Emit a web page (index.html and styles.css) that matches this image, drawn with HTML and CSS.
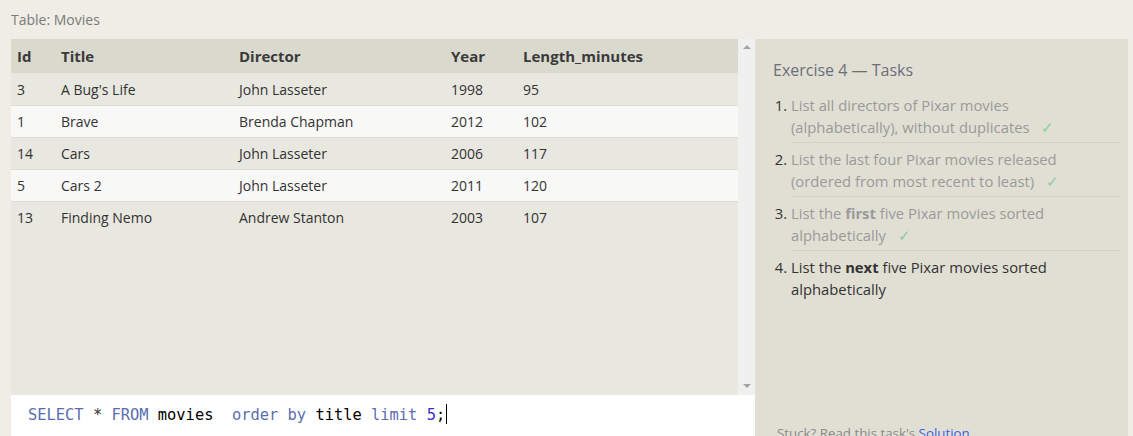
FILE: index.html
```html
<!DOCTYPE html>
<html>
<head>
<meta charset="utf-8">
<link rel="stylesheet" href="styles.css">
</head>
<body>
<div class="page">
  <div class="main">
    <div class="caption">Table: Movies</div>
    <div class="table-wrap">
      <div class="table-scroll">
        <table class="movies">
          <thead>
            <tr><th class="c-id">Id</th><th class="c-title">Title</th><th class="c-dir">Director</th><th class="c-year">Year</th><th>Length_minutes</th></tr>
          </thead>
          <tbody>
            <tr><td>3</td><td>A Bug's Life</td><td>John Lasseter</td><td>1998</td><td>95</td></tr>
            <tr><td>1</td><td>Brave</td><td>Brenda Chapman</td><td>2012</td><td>102</td></tr>
            <tr><td>14</td><td>Cars</td><td>John Lasseter</td><td>2006</td><td>117</td></tr>
            <tr><td>5</td><td>Cars 2</td><td>John Lasseter</td><td>2011</td><td>120</td></tr>
            <tr><td>13</td><td>Finding Nemo</td><td>Andrew Stanton</td><td>2003</td><td>107</td></tr>
          </tbody>
        </table>
      </div>
      <div class="scrollbar">
        <span class="arrow up"></span>
        <span class="arrow down"></span>
      </div>
    </div>
    <div class="editor"><span class="kw">SELECT</span> <span class="op">*</span> <span class="kw">FROM</span> <span class="id">movies</span>  <span class="kw">order by</span> <span class="id">title</span> <span class="kw">limit</span> <span class="num">5</span><span class="id">;</span><span class="cursor"></span></div>
  </div>
  <aside class="panel">
    <h2 class="panel-title">Exercise 4 — Tasks</h2>
    <ol class="tasks">
      <li class="done">List all directors of Pixar movies<br>(alphabetically), without duplicates <span class="check">✓</span></li>
      <li class="done">List the last four Pixar movies released<br>(ordered from most recent to least) <span class="check">✓</span></li>
      <li class="done">List the <b>first</b> five Pixar movies sorted<br>alphabetically <span class="check">✓</span></li>
      <li class="current">List the <b>next</b> five Pixar movies sorted<br>alphabetically</li>
    </ol>
    <div class="stuck">Stuck? Read this task's <a href="#">Solution</a></div>
  </aside>
</div>
</body>
</html>
```

FILE: styles.css
```css
html, body {
  margin: 0;
  padding: 0;
  background: #efede6;
  font-family: "Open Sans", sans-serif;
  overflow: hidden;
}
.page {
  display: flex;
  height: 436px;
  padding-left: 11px;
  padding-right: 5px;
}
.main {
  width: 744px;
  display: flex;
  flex-direction: column;
}
.caption {
  height: 39px;
  line-height: 39px;
  font-size: 14px;
  color: #7a7a7a;
}
.table-wrap {
  display: flex;
  height: 356px;
  background: #e8e7e0;
}
.table-scroll {
  flex: 1;
}
.movies {
  width: 100%;
  border-collapse: collapse;
  font-size: 14px;
  color: #333;
}
.movies th {
  background: #dad9ce;
  text-align: left;
  font-weight: 700;
  font-size: 15px;
  height: 34px;
  padding: 0 6px;
  color: #3a3a3a;
}
.movies td {
  height: 32px;
  padding: 1px 6px 0;
  box-sizing: border-box;
  border-bottom: 1px solid #dedcd6;
}
.movies tbody tr:nth-child(even) td {
  background: #f8f8f6;
}
.movies tbody tr:last-child td {
  border-bottom: none;
}
.c-id { width: 32px; }
.c-title { width: 166px; }
.c-dir { width: 200px; }
.c-year { width: 60px; }
.scrollbar {
  width: 17px;
  background: #f0f0f0;
  display: flex;
  flex-direction: column;
  justify-content: space-between;
  align-items: center;
  padding: 6px 0;
  box-sizing: border-box;
}
.arrow {
  width: 0;
  height: 0;
  border-left: 4px solid transparent;
  border-right: 4px solid transparent;
}
.arrow.up { border-bottom: 4px solid #a3a3a3; }
.arrow.down { border-top: 4px solid #a3a3a3; margin-bottom: 1px; }
.editor {
  flex: 1;
  background: #fff;
  padding: 8px 0 0 17px;
  font-family: "DejaVu Sans Mono", monospace;
  font-size: 15.4px;
  line-height: 24px;
  white-space: pre;
  color: #000;
}
.kw { color: #5a6db0; }
.op { color: #333; }
.id { color: #000; }
.num { color: #3b2bd0; }
.cursor {
  display: inline-block;
  width: 1px;
  height: 20px;
  background: #000;
  vertical-align: -4px;
  margin-left: 1px;
}
.panel {
  width: 373px;
  margin-top: 39px;
  background: #e1dfd4;
  padding: 20px 8px 0 18px;
  box-sizing: border-box;
  display: flex;
  flex-direction: column;
}
.panel-title {
  margin: 0;
  font-weight: 400;
  font-size: 16px;
  line-height: 22px;
  color: #6b6f7a;
}
.tasks {
  margin: 8px 0 0;
  padding-left: 18px;
  font-size: 14.8px;
  line-height: 22px;
}
.tasks li {
  padding: 5px 0 4px;
  border-bottom: 1px solid #d3d1c6;
}
.tasks li::marker {
  color: #333;
}
.tasks li.done { color: #9a9a9a; }
.tasks li.current { color: #333; border-bottom: none; }
.tasks b { font-weight: 700; }
.check {
  color: #86cf98;
  margin-left: 8px;
}
.stuck {
  margin-top: auto;
  margin-bottom: -6px;
  font-size: 13.3px;
  color: #8a8a8a;
  padding-left: 4px;
}
.stuck a {
  color: #3d5fe0;
  text-decoration: none;
}
```
